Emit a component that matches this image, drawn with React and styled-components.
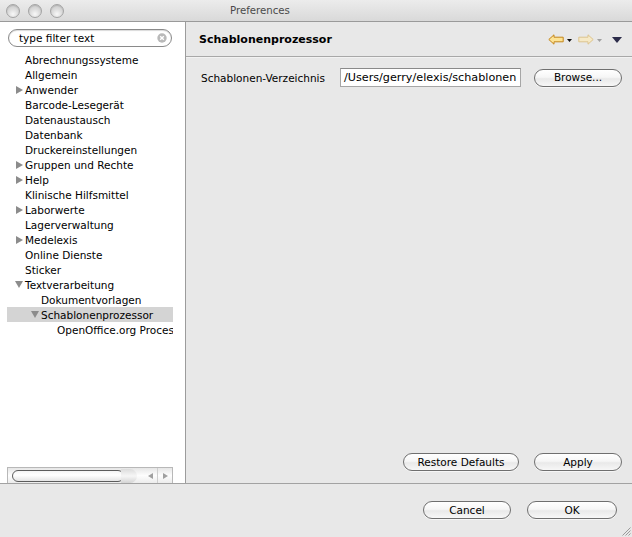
import React from "react";
import styled, { createGlobalStyle } from "styled-components";

const Global = createGlobalStyle`
  html, body { margin: 0; padding: 0; background: #e8e8e8; }
  body { font-family: "DejaVu Sans", "Noto Sans", sans-serif; font-size: 10.5px; color: #000; }
  * { box-sizing: border-box; }
`;

const Window = styled.div`
  position: relative;
  width: 632px;
  height: 537px;
  display: flex;
  flex-direction: column;
  background: #e8e8e8;
  overflow: hidden;
`;

const TitleBar = styled.div`
  height: 22px;
  flex: none;
  display: flex;
  align-items: center;
  background: linear-gradient(#ececec, #d9d9d9);
  border-bottom: 1px solid #9a9a9a;
`;

const Lights = styled.div`
  display: flex;
  gap: 8px;
  padding-left: 6px;
`;

const Light = styled.span`
  width: 14px;
  height: 14px;
  border-radius: 50%;
  border: 1px solid #a4a4a4;
  background: radial-gradient(circle at 50% 75%, #f8f8f8 0%, #dcdcdc 45%, #c4c4c4 100%);
  box-shadow: inset 0 1px 1px rgba(0,0,0,0.12);
`;

const Title = styled.div`
  margin-left: 166px;
  font-size: 10.2px;
  color: #4a4a4a;
`;

const Main = styled.div`
  flex: 1;
  display: flex;
  min-height: 0;
  border-bottom: 1px solid #a2a2a2;
`;

const LeftPanel = styled.div`
  width: 186px;
  flex: none;
  background: #fff;
  border-right: 1px solid #9c9c9c;
  display: flex;
  flex-direction: column;
  padding: 7px 12px 0 7px;
`;

const Search = styled.div`
  margin-left: 1px;
  width: 164px;
  height: 18px;
  border: 1px solid #8a8a8a;
  border-radius: 9px;
  display: flex;
  align-items: center;
  padding: 0 4px 0 10px;
  box-shadow: inset 0 1px 1px rgba(0,0,0,0.15);
  font-size: 10.5px;
`;

const SearchText = styled.span`
  flex: 1;
`;

const ClearIcon = styled.svg`
  width: 10px;
  height: 10px;
  flex: none;
`;

const Tree = styled.div`
  flex: 1;
  margin-top: 5px;
  overflow: hidden;
`;

const Row = styled.div`
  height: 15px;
  display: flex;
  align-items: center;
  white-space: nowrap;
  padding-left: ${p => 8 + p.$level * 16}px;
  background: ${p => (p.$selected ? "#d4d4d4" : "transparent")};
`;

const Twisty = styled.span`
  width: 10px;
  flex: none;
  display: flex;
  align-items: center;
`;

const RightTri = styled.span`
  width: 0;
  height: 0;
  margin-left: 1px;
  border-left: 7px solid #8c8c8c;
  border-top: 4.5px solid transparent;
  border-bottom: 4.5px solid transparent;
`;

const DownTri = styled.span`
  width: 0;
  height: 0;
  border-top: 7px solid #8c8c8c;
  border-left: 4.5px solid transparent;
  border-right: 4.5px solid transparent;
`;

const HScroll = styled.div`
  height: 16px;
  flex: none;
  display: flex;
  align-items: center;
  border: 1px solid #b8b8b8;
  border-bottom: none;
  background: linear-gradient(#e6e6e6, #fdfdfd 50%, #ececec);
`;

const Track = styled.div`
  flex: 1;
  height: 100%;
  display: flex;
  align-items: center;
  padding-left: 4px;
`;

const Thumb = styled.div`
  width: 112px;
  height: 12px;
  border-radius: 6px;
  border: 1px solid #5c5c5c;
  background: linear-gradient(#f4f4f4, #ffffff 40%, #e4e4e4);
`;

const Bulge = styled.div`
  width: 16px;
  height: 14px;
  margin-left: -3px;
  border-radius: 0 8px 8px 0;
  background: linear-gradient(#dcdcdc, #f6f6f6 50%, #d4d4d4);
`;

const ArrowBtn = styled.div`
  width: 15px;
  height: 100%;
  display: flex;
  align-items: center;
  justify-content: center;
  border-left: 1px solid ${p => (p.$divider ? "#cfcfcf" : "transparent")};
`;

const SmallTri = styled.span`
  width: 0;
  height: 0;
  border-top: 3.5px solid transparent;
  border-bottom: 3.5px solid transparent;
  ${p => (p.$dir === "left" ? "border-right: 5px solid #a0a0a0;" : "border-left: 5px solid #a0a0a0;")}
`;

const RightPanel = styled.div`
  flex: 1;
  display: flex;
  flex-direction: column;
  background: #e8e8e8;
`;

const Header = styled.div`
  height: 35px;
  flex: none;
  display: flex;
  align-items: center;
  padding: 0 10px 0 13px;
  border-bottom: 1px solid #a8a8a8;
  box-shadow: 0 1px 0 #f2f2f2;
`;

const HeaderTitle = styled.div`
  flex: 1;
  font-weight: bold;
  font-size: 11px;
`;

const NavIcons = styled.div`
  display: flex;
  align-items: center;
`;

const NavSvg = styled.svg`
  display: block;
`;

const Content = styled.div`
  flex: 1;
  display: flex;
  flex-direction: column;
  padding: 11px 10px 12px 15px;
`;

const FieldRow = styled.div`
  display: flex;
  align-items: center;
  height: 19px;
`;

const Label = styled.span`
  width: 139px;
  flex: none;
`;

const TextField = styled.div`
  width: 181px;
  height: 19px;
  flex: none;
  background: #fff;
  border: 1px solid #a6a6a6;
  border-top-color: #8a8a8a;
  font-size: 11.2px;
  display: flex;
  align-items: center;
  padding-left: 3px;
  white-space: nowrap;
  overflow: hidden;
`;

const Spacer = styled.div`
  flex: 1;
`;

const ButtonRow = styled.div`
  display: flex;
  justify-content: flex-end;
  gap: ${p => p.$gap || 15}px;
`;

const Button = styled.div`
  width: ${p => p.$w}px;
  height: 18px;
  flex: none;
  margin-left: ${p => p.$ml || 0}px;
  border: 1px solid #6f6f6f;
  border-radius: 9px;
  background: linear-gradient(#ffffff, #f6f6f6 45%, #e9e9e9 55%, #f7f7f7);
  box-shadow: 0 1px 0 rgba(255,255,255,0.6);
  display: flex;
  align-items: center;
  justify-content: center;
  font-size: 10.5px;
  line-height: 1;
`;

const Footer = styled.div`
  height: 53px;
  flex: none;
  padding: 17px 15px 0 0;
`;

const Grip = styled.svg`
  position: absolute;
  right: 1px;
  bottom: 1px;
`;

const items = [
  { t: "Abrechnungssysteme", l: 0 },
  { t: "Allgemein", l: 0 },
  { t: "Anwender", l: 0, tw: "r" },
  { t: "Barcode-Lesegerät", l: 0 },
  { t: "Datenaustausch", l: 0 },
  { t: "Datenbank", l: 0 },
  { t: "Druckereinstellungen", l: 0 },
  { t: "Gruppen und Rechte", l: 0, tw: "r" },
  { t: "Help", l: 0, tw: "r" },
  { t: "Klinische Hilfsmittel", l: 0 },
  { t: "Laborwerte", l: 0, tw: "r" },
  { t: "Lagerverwaltung", l: 0 },
  { t: "Medelexis", l: 0, tw: "r" },
  { t: "Online Dienste", l: 0 },
  { t: "Sticker", l: 0 },
  { t: "Textverarbeitung", l: 0, tw: "d" },
  { t: "Dokumentvorlagen", l: 1 },
  { t: "Schablonenprozessor", l: 1, tw: "d", sel: true },
  { t: "OpenOffice.org Processor", l: 2 },
];

function BackArrow({ faded }) {
  const fill = faded ? "#f6e9c6" : "#fde394";
  const stroke = faded ? "#dcc48e" : "#c4861a";
  return (
    <NavSvg width="16" height="11" viewBox="0 0 16 11">
      <polygon points="0.8,5.5 6,0.8 6,3.2 15.2,3.2 15.2,7.8 6,7.8 6,10.2" fill={fill} stroke={stroke} strokeWidth="1" strokeLinejoin="round" />
    </NavSvg>
  );
}

function FwdArrow({ faded }) {
  const fill = faded ? "#f6e9c6" : "#fde394";
  const stroke = faded ? "#dcc48e" : "#c4861a";
  return (
    <NavSvg width="16" height="11" viewBox="0 0 16 11">
      <polygon points="15.2,5.5 10,0.8 10,3.2 0.8,3.2 0.8,7.8 10,7.8 10,10.2" fill={fill} stroke={stroke} strokeWidth="1" strokeLinejoin="round" />
    </NavSvg>
  );
}

function Caret({ color, w = 5, ml = 3, mr = 0 }) {
  return (
    <NavSvg width={w + ml + mr} height="11" viewBox={`${-ml} 0 ${w + ml + mr} 11`}>
      <polygon points={`0,5 ${w},5 ${w / 2},8`} fill={color} />
    </NavSvg>
  );
}

export default function App() {
  return (
    <Window>
      <Global />
      <TitleBar>
        <Lights>
          <Light />
          <Light />
          <Light />
        </Lights>
        <Title>Preferences</Title>
      </TitleBar>
      <Main>
        <LeftPanel>
          <Search>
            <SearchText>type filter text</SearchText>
            <ClearIcon viewBox="0 0 10 10">
              <circle cx="5" cy="5" r="4.7" fill="#b9b9b9" />
              <path d="M3.2 3.2 L6.8 6.8 M6.8 3.2 L3.2 6.8" stroke="#fff" strokeWidth="1.4" />
            </ClearIcon>
          </Search>
          <Tree>
            {items.map(it => (
              <Row key={it.t} $level={it.l} $selected={it.sel}>
                <Twisty>{it.tw === "r" ? <RightTri /> : it.tw === "d" ? <DownTri /> : null}</Twisty>
                {it.t}
              </Row>
            ))}
          </Tree>
          <HScroll>
            <Track>
              <Thumb />
              <Bulge />
            </Track>
            <ArrowBtn>
              <SmallTri $dir="left" />
            </ArrowBtn>
            <ArrowBtn $divider>
              <SmallTri $dir="right" />
            </ArrowBtn>
          </HScroll>
        </LeftPanel>
        <RightPanel>
          <Header>
            <HeaderTitle>Schablonenprozessor</HeaderTitle>
            <NavIcons>
              <BackArrow />
              <Caret color="#111" ml={3} mr={6} />
              <FwdArrow faded />
              <Caret color="#a0a0a0" ml={3} mr={10} />
              <NavSvg width="10" height="11" viewBox="0 0 10 11">
                <polygon points="0,3 10,3 5,9" fill="#2c2c4a" />
              </NavSvg>
            </NavIcons>
          </Header>
          <Content>
            <FieldRow>
              <Label>Schablonen-Verzeichnis</Label>
              <TextField>/Users/gerry/elexis/schablonen</TextField>
              <Button $w={88} $ml={13}>Browse...</Button>
            </FieldRow>
            <Spacer />
            <ButtonRow>
              <Button $w={116}>Restore Defaults</Button>
              <Button $w={88}>Apply</Button>
            </ButtonRow>
          </Content>
        </RightPanel>
      </Main>
      <Footer>
        <ButtonRow $gap={16}>
          <Button $w={88}>Cancel</Button>
          <Button $w={90}>OK</Button>
        </ButtonRow>
      </Footer>
      <Grip width="10" height="10" viewBox="0 0 10 10">
        <path d="M9.5 1.5 L1.5 9.5 M9.5 4.5 L4.5 9.5 M9.5 7.5 L7.5 9.5" stroke="#9a9a9a" strokeWidth="1" />
      </Grip>
    </Window>
  );
}
